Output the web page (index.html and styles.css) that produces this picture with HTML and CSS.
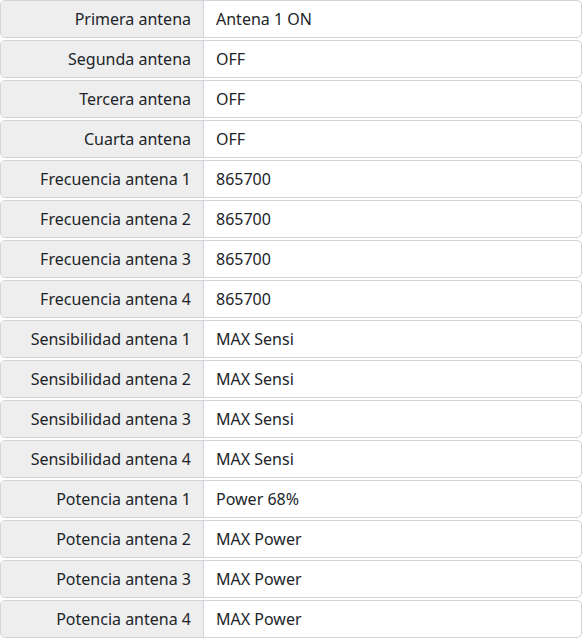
FILE: index.html
```html
<!DOCTYPE html>
<html>
<head>
<meta charset="utf-8">
<link rel="stylesheet" href="styles.css">
</head>
<body>
<div class="list">
  <div class="row"><div class="label">Primera antena</div><div class="value">Antena 1 ON</div></div>
  <div class="row"><div class="label">Segunda antena</div><div class="value">OFF</div></div>
  <div class="row"><div class="label">Tercera antena</div><div class="value">OFF</div></div>
  <div class="row"><div class="label">Cuarta antena</div><div class="value">OFF</div></div>
  <div class="row"><div class="label">Frecuencia antena 1</div><div class="value">865700</div></div>
  <div class="row"><div class="label">Frecuencia antena 2</div><div class="value">865700</div></div>
  <div class="row"><div class="label">Frecuencia antena 3</div><div class="value">865700</div></div>
  <div class="row"><div class="label">Frecuencia antena 4</div><div class="value">865700</div></div>
  <div class="row"><div class="label">Sensibilidad antena 1</div><div class="value">MAX Sensi</div></div>
  <div class="row"><div class="label">Sensibilidad antena 2</div><div class="value">MAX Sensi</div></div>
  <div class="row"><div class="label">Sensibilidad antena 3</div><div class="value">MAX Sensi</div></div>
  <div class="row"><div class="label">Sensibilidad antena 4</div><div class="value">MAX Sensi</div></div>
  <div class="row"><div class="label">Potencia antena 1</div><div class="value">Power 68%</div></div>
  <div class="row"><div class="label">Potencia antena 2</div><div class="value">MAX Power</div></div>
  <div class="row"><div class="label">Potencia antena 3</div><div class="value">MAX Power</div></div>
  <div class="row"><div class="label">Potencia antena 4</div><div class="value">MAX Power</div></div>
</div>
</body>
</html>
```
FILE: styles.css
```css
html, body {
  margin: 0;
  padding: 0;
  background: #fff;
}
body {
  font-family: "Noto Sans", sans-serif;
  font-size: 16px;
  color: #212529;
}
.list {
  display: flex;
  flex-direction: column;
  gap: 2px;
}
.row {
  display: flex;
  height: 38px;
  box-sizing: border-box;
  border: 1px solid #ced4da;
  border-radius: 5px;
  overflow: hidden;
}
.label {
  width: 203px;
  flex: none;
  box-sizing: border-box;
  background: #eeeeee;
  border-right: 1px solid #ced4da;
  display: flex;
  align-items: center;
  justify-content: flex-end;
  padding-right: 12px;
  padding-bottom: 1px;
}
.value {
  flex: 1;
  display: flex;
  align-items: center;
  padding-left: 12px;
  padding-bottom: 1px;
}
```
